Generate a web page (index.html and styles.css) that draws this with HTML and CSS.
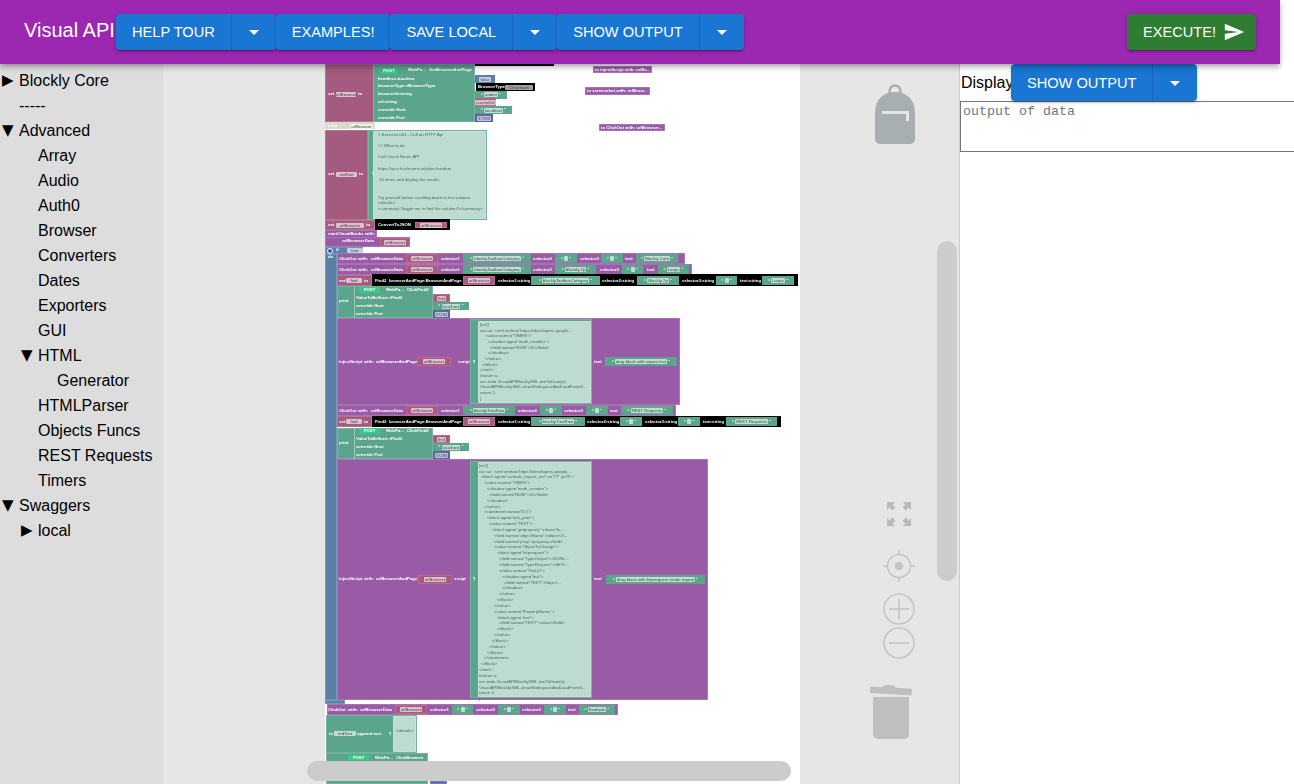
FILE: index.html
```html
<!DOCTYPE html>
<html lang="en">
<head>
  <meta charset="UTF-8">
  <title>Visual API</title>
  <link rel="stylesheet" href="styles.css">
</head>
<body>
  <header class="topbar">
    <div class="brand">Visual API</div>
    <div class="btn-group">
      <button class="btn">HELP TOUR</button>
      <button class="btn btn-drop"><svg viewBox="0 0 24 24"><path d="M7 10l5 5 5-5z"/></svg></button>
    </div>
    <div class="btn-group">
      <button class="btn">EXAMPLES!</button>
    </div>
    <div class="btn-group">
      <button class="btn">SAVE LOCAL</button>
      <button class="btn btn-drop"><svg viewBox="0 0 24 24"><path d="M7 10l5 5 5-5z"/></svg></button>
    </div>
    <div class="btn-group">
      <button class="btn">SHOW OUTPUT</button>
      <button class="btn btn-drop"><svg viewBox="0 0 24 24"><path d="M7 10l5 5 5-5z"/></svg></button>
    </div>
    <button class="btn btn-run">EXECUTE! <svg viewBox="0 0 24 24"><path d="M2.01 21L23 12 2.01 3 2 10l15 2-15 2z"/></svg></button>
  </header>

  <main class="layout">
    <nav class="tree">
      <div class="tree-row"><span class="caret">&#9654;</span>Blockly Core</div>
      <div class="tree-row"><span class="caret"></span>-----</div>
      <div class="tree-row"><span class="caret">&#9660;</span>Advanced</div>
      <div class="tree-row depth1"><span class="caret"></span>Array</div>
      <div class="tree-row depth1"><span class="caret"></span>Audio</div>
      <div class="tree-row depth1"><span class="caret"></span>Auth0</div>
      <div class="tree-row depth1"><span class="caret"></span>Browser</div>
      <div class="tree-row depth1"><span class="caret"></span>Converters</div>
      <div class="tree-row depth1"><span class="caret"></span>Dates</div>
      <div class="tree-row depth1"><span class="caret"></span>Exporters</div>
      <div class="tree-row depth1"><span class="caret"></span>GUI</div>
      <div class="tree-row depth1"><span class="caret">&#9660;</span>HTML</div>
      <div class="tree-row depth2"><span class="caret"></span>Generator</div>
      <div class="tree-row depth1"><span class="caret"></span>HTMLParser</div>
      <div class="tree-row depth1"><span class="caret"></span>Objects Funcs</div>
      <div class="tree-row depth1"><span class="caret"></span>REST Requests</div>
      <div class="tree-row depth1"><span class="caret"></span>Timers</div>
      <div class="tree-row"><span class="caret">&#9660;</span>Swaggers</div>
      <div class="tree-row depth1"><span class="caret">&#9654;</span>local</div>
    </nav>

    <section class="workspace">
      <div class="sheet" id="sheet"></div>

      <!-- Blockly controls -->
      <svg class="ctl backpack" viewBox="0 0 40 60">
        <circle cx="20" cy="7" r="5.5" fill="none" stroke="#a8afb1" stroke-width="2.5"/>
        <path d="M0 29C0 15 9 8 20 8s20 7 20 21v26a5 5 0 0 1-5 5H5a5 5 0 0 1-5-5z" fill="#a8afb1"/>
        <path d="M7 27h27v10h-3v-7H7z" fill="#e6e6e6"/>
      </svg>
      <svg class="ctl fullscreen" viewBox="0 0 24 24" fill="#b3bbc0">
        <path d="M0 0h8L5.6 2.4 8.4 5.2 5.2 8.4 2.4 5.6 0 8z"/>
        <path d="M24 0h-8l2.4 2.4-2.8 2.8 3.2 3.2 2.8-2.8L24 8z"/>
        <path d="M0 24h8l-2.400-2.400 2.800-2.800-3.200-3.200-2.800 2.800L0 16z"/>
        <path d="M24 24h-8l2.400-2.400-2.800-2.800 3.200-3.200 2.800 2.800L24 16z"/>
      </svg>
      <svg class="ctl target" viewBox="0 0 32 32" fill="none" stroke="#c4c4c4" stroke-width="1.5">
        <circle cx="16" cy="16" r="11.500"/>
        <path d="M16 0v4M16 28v4M0 16h4M28 16h4"/>
        <circle cx="16" cy="16" r="4.300" fill="#c4c4c4" stroke="none"/>
      </svg>
      <svg class="ctl zoom-in" viewBox="0 0 32 32" fill="none" stroke="#c4c4c4" stroke-width="1.500">
        <circle cx="16" cy="16" r="15"/>
        <path d="M16 6v20M6 16h20"/>
      </svg>
      <svg class="ctl zoom-out" viewBox="0 0 32 32" fill="none" stroke="#c4c4c4" stroke-width="1.500">
        <circle cx="16" cy="16" r="15"/>
        <path d="M6 16h20"/>
      </svg>
      <svg class="ctl trash" viewBox="0 0 42 56" fill="#bfbfbf">
        <path d="M0 3.500l12 .7c1-1.800 3-2.200 6-2.200 4 0 7 .7 8 2.800l16 1-.4 6.700L0 10z"/>
        <path d="M3 14h36v37a5 5 0 0 1-5 5H8a5 5 0 0 1-5-5z"/>
      </svg>

      <div class="scroll scroll-h"></div>
      <div class="scroll scroll-v"></div>
    </section>

    <aside class="output">
      <div class="output-head">
        <span class="output-label">Display</span>
        <div class="btn-group">
          <button class="btn">SHOW OUTPUT</button>
          <button class="btn btn-drop"><svg viewBox="0 0 24 24"><path d="M7 10l5 5 5-5z"/></svg></button>
        </div>
      </div>
      <textarea class="output-text" placeholder="output of data"></textarea>
    </aside>
  </main>

  <script>
    // Sheet origin in page coordinates, the block data below is in page coordinates
    const ORIGIN_X = 325, ORIGIN_Y = 64;
    const sheet = document.getElementById('sheet');

    function put(cls, x, y, w, h, text) {
      const div = document.createElement('div');
      div.className = cls;
      div.style.left = `${x - ORIGIN_X}px`;
      div.style.top = `${y - ORIGIN_Y}px`;
      if (w) div.style.width = `${w}px`;
      if (h) div.style.height = `${h}px`;
      if (text) div.textContent = text;
      sheet.appendChild(div);
      return div;
    }

    // Block bodies: class, x1, y1, x2, y2
    const bodies = [
      ['blk black', 374, 64, 554, 65.5],
      ['blk mag', 325, 64, 374, 122],
      ['blk green', 373, 64, 475, 122],
      ['blk pale', 325, 122, 375, 129],
      ['blk mag', 325, 130, 368, 220],
      ['blk green', 368, 130, 487, 220],
      ['blk mint', 373, 131, 486, 219],
      ['blk mag', 325, 220, 375, 230],
      ['blk black', 375, 219, 450, 230],
      ['blk purple', 325, 230, 377, 238],
      ['blk purple', 325, 237, 410, 247],
      ['blk blue', 325, 247, 363, 254],
      ['blk blue', 325, 254, 337, 700],
      ['blk blue', 325, 700, 345, 704],
      ['blk purple', 337, 253, 685, 264],
      ['blk purple', 337, 264, 692, 275],
      ['blk mag', 337, 275, 372, 286],
      ['blk black', 372, 274, 798, 286],
      ['blk green', 337, 286, 433, 318],
      ['blk divider', 354, 287, 0.8, 31],
      ['blk purple', 337, 318, 680, 405],
      ['blk green', 470, 319, 592, 404],
      ['blk mint', 478, 321, 591, 403],
      ['blk purple', 337, 405, 676, 416],
      ['blk mag', 337, 416, 372, 427],
      ['blk black', 372, 416, 781, 427],
      ['blk green', 337, 428, 433, 459],
      ['blk divider', 354, 428, 0.8, 31],
      ['blk purple', 337, 459, 708, 700],
      ['blk green', 470, 461, 592, 698],
      ['blk mint', 478, 462, 591, 697],
      ['blk purple', 327, 704, 618, 715],
      ['blk green', 326, 715, 417, 753],
      ['blk mint', 393, 716, 416, 752],
      ['blk green', 326, 753, 428, 784],
      ['blk indigo', 430, 781, 447, 784],
      ['blk purple', 593, 66, 652, 73],
      ['blk purple', 585, 87, 650, 95],
      ['blk purple', 599, 124, 665, 131]
    ];
    bodies.forEach(b => {
      // divider rows give a plain width and height instead of x2, y2
      if (b[0] === 'blk divider') put(b[0], b[1], b[2], b[3], b[4]);
      else put(b[0], b[1], b[2], b[3] - b[1], b[4] - b[2]);
    });

    // White labels: x, centre y, text
    const labels = [
      [408, 70, 'WebPa...'], [429, 70, 'GetBrowserAndPage'],
      [378, 79, 'headless:boolean'], [378, 86, 'browserType:<BrowserType'], [378, 94, 'browserId:string'],
      [378, 102, 'url:string'], [378, 110, 'override Host'], [378, 118, 'override Port'],
      [328, 94, 'set'], [358, 94, 'to'],
      [328, 126, 'print'], [328, 174, 'set'], [359, 174, 'to'], [372, 174, '\u00b6'],
      [328, 225, 'set'], [366, 225, 'to'], [378, 225, 'ConvertToJSON'],
      [328, 234, 'startChuckBooks'], [365, 234, 'with:'], [342, 241, 'urlBrowserData'],
      [336, 250, 'if'], [328, 257, 'do'],
      [595, 69.500, 'to injectScript with: urlBr...'], [587, 91, 'to screenshot with: urlBrow...'], [601, 127.500, 'to ClickOut with: urlBrowser...'],
      // ClickOut rows
      [339, 258.500, 'ClickOut'], [358, 258.500, 'with:'], [371, 258.500, 'urlBrowserData'], [441, 258.500, 'selector1'], [533, 258.500, 'selector2'], [580, 258.500, 'selector3'], [625, 258.500, 'text'],
      [339, 269.500, 'ClickOut'], [358, 269.500, 'with:'], [371, 269.500, 'urlBrowserData'], [441, 269.500, 'selector1'], [533, 269.500, 'selector2'], [600, 269.500, 'selector3'], [647, 269.500, 'text'],
      [339, 410.500, 'ClickOut'], [358, 410.500, 'with:'], [371, 410.500, 'urlBrowserData'], [441, 410.500, 'selector1'], [518, 410.500, 'selector2'], [564, 410.500, 'selector3'], [610, 410.500, 'text'],
      [328, 709.500, 'ClickOut'], [348, 709.500, 'with:'], [360, 709.500, 'urlBrowserData'], [430, 709.500, 'selector1'], [476, 709.500, 'selector2'], [522, 709.500, 'selector3'], [568, 709.500, 'text'],
      // set find rows
      [339, 280.500, 'set'], [364, 280.500, 'to'], [375, 280.500, 'Find2'], [389, 280.500, 'browserAndPage:BrowserAndPage'], [498, 280.500, 'selector1:string'], [602, 280.500, 'selector2:string'], [682, 280.500, 'selector3:string'], [740, 280.500, 'text:string'],
      [339, 421.500, 'set'], [364, 421.500, 'to'], [375, 421.500, 'Find2'], [389, 421.500, 'browserAndPage:BrowserAndPage'], [498, 421.500, 'selector1:string'], [587, 421.500, 'selector2:string'], [645, 421.500, 'selector3:string'], [703, 421.500, 'text:string'],
      // print blocks
      [339, 301, 'print'], [386, 290, 'WebPa...'], [407, 290, 'ClickFind2'], [356, 298, 'ValueToBeSent:<Find2'], [356, 306, 'override Host'], [356, 314, 'override Port'],
      [339, 443, 'print'], [386, 431, 'WebPa...'], [407, 431, 'ClickFind2'], [356, 439, 'ValueToBeSent:<Find2'], [356, 447, 'override Host'], [356, 455, 'override Port'],
      // injectScript blocks
      [339, 361.500, 'injectScript'], [364, 361.500, 'with:'], [376, 361.500, 'urlBrowserAndPage'], [458, 361.500, 'script'], [473, 361.500, '\u00b6'], [594, 361.500, 'text'],
      [339, 579, 'injectScript'], [364, 579, 'with:'], [376, 579, 'urlBrowserAndPage'], [454, 579, 'script'], [473, 579, '\u00b6'], [594, 579, 'text'],
      // append text
      [329, 733.500, 'to'], [357, 733.500, 'append text'], [389, 733.500, '\u00b6'], [375, 757.500, 'WebPa...'], [396, 757.500, 'ClickBrowser']
    ];
    labels.forEach(l => put('lbl', l[0], l[1] - 3, 0, 0, l[2]));

    // Fields on the block itself: x1, x2, centre y, text
    const fields = [
      [336, 356, 94, 'urlBrowser'], [350, 373, 126, 'urlBrowser'],
      [336, 357, 174, 'mdText'], [336, 364, 225, 'urlBrowser'],
      [346, 362, 280.500, 'find'], [346, 362, 421.500, 'find'], [334, 356, 733.500, 'mdText'],
      [347, 363, 250.500, 'true']
    ];
    fields.forEach(f => put('field', f[0], f[2] - 2.500, f[1] - f[0], 5, f[3]));

    // Plugged in value blocks: kind, x1, x2, y1, y2, text
    const chips = [
      ['bool', 475, 495, 75, 83, 'false'],
      ['str', 475, 507, 90.500, 98.500, 'andrei'],
      ['var', 475, 496, 98, 106, 'currentUrl'],
      ['str', 475, 512, 106, 114, 'localhost'],
      ['num', 475, 493, 114, 122, '37283'],
      ['var', 415, 447, 222, 228, 'urlBrowser'],
      ['var', 380, 410, 238, 246, 'urlBrowser'],
      ['var', 406, 438, 254, 263, 'urlBrowser'], ['str', 463, 531, 254, 263, 'blocklyToolboxCategory'], ['str', 555, 577, 254, 263, ' '], ['str', 601, 623, 254, 263, ' '], ['str', 636, 678, 254, 263, 'Blockly Core'],
      ['var', 406, 438, 265, 274, 'urlBrowser'], ['str', 463, 531, 265, 274, 'blocklyToolboxCategory'], ['str', 555, 596, 265, 274, 'Blockly 2p'], ['str', 622, 643, 265, 274, ' '], ['str', 658, 689, 265, 274, 'Loops'],
      ['var', 463, 495, 276, 285, 'urlBrowser'], ['str', 531, 600, 276, 285, 'blocklyToolboxCategory'], ['str', 637, 679, 276, 285, 'Blockly 2p'], ['str', 716, 737, 276, 285, ' '], ['str', 762, 794, 276, 285, 'Loops'],
      ['var', 433, 450, 294, 302, 'find'], ['str', 433, 469, 302, 310, 'localhost'], ['num', 433, 450, 310, 318, '37283'],
      ['var', 417, 451, 357, 366, 'urlBrowser'], ['str', 605, 677, 357, 366, 'drag block with repeat text'],
      ['var', 406, 438, 406, 415, 'urlBrowser'], ['str', 463, 515, 406, 415, 'blocklyTreeRow'], ['str', 540, 562, 406, 415, ' '], ['str', 586, 608, 406, 415, ' '], ['str', 621, 673, 406, 415, 'REST Requests'],
      ['var', 463, 495, 417, 426, 'urlBrowser'], ['str', 531, 585, 417, 426, 'blocklyTreeRow'], ['str', 620, 642, 417, 426, ' '], ['str', 678, 700, 417, 426, ' '], ['str', 726, 777, 417, 426, 'REST Requests'],
      ['var', 433, 450, 435, 443, 'find'], ['str', 433, 469, 443, 451, 'localhost'], ['num', 433, 450, 451, 459, '37283'],
      ['var', 418, 452, 575, 584, 'urlBrowser'], ['str', 606, 705, 575, 584, 'drag block with httprequest inside repeat'],
      ['var', 395, 427, 705, 714, 'urlBrowser'], ['str', 452, 473, 705, 714, ' '], ['str', 498, 520, 705, 714, ' '], ['str', 544, 566, 705, 714, ' '], ['str', 579, 615, 705, 714, 'Example']
    ];
    chips.forEach(c => {
      const chip = put(`chip ${c[0]}`, c[1], c[3], c[2] - c[1], c[4] - c[3]);
      const inner = document.createElement('span');
      inner.textContent = c[5];
      if (c[0] === 'str') chip.append('\u201c');
      chip.appendChild(inner);
      if (c[0] === 'str') chip.append('\u201d');
    });

    // The black BrowserType call and the POST pills
    put('blk black', 476, 83, 59, 7.500);
    put('lbl', 478, 83.500, 0, 0, 'BrowserType');
    put('field', 505, 84.500, 28, 5, 'Chromium');
    [[381, 68, 16, 6], [359, 287, 21, 6], [359, 428, 21, 6], [348, 755, 21, 5]].forEach(p => put('post', p[0], p[1], p[2], p[3], 'POST'));
    put('gear', 327, 247.500, 6, 6);

    // Text inside the comment blocks
    const intro = [
      [134.700, '# Exercise 001 - Call an HTTP Api'], [146, '## What to do'], [157, 'Call Chuck Norris API'],
      [168.700, 'https://api.chucknorris.io/jokes/random'], [180, ' 10 times and display the results'],
      [197.700, 'Try yourself before scrolling down to the solution'], [203.300, '<details>'],
      [208.700, '<summary>Toggle me to find the solution?</summary>']
    ];
    intro.forEach(r => put('code', 378, r[0] - 3, 0, 0, r[1]));

    const script1 = [
      [0, '[=>]{'], [0, 'var a= `<xml xmlns="https://developers.google...'], [5, '<value name="TIMES">'],
      [8, '<shadow type="math_number">'], [10, '<field name="NUM">10</field>'], [8, '</shadow>'],
      [5, '</value>'], [2, '</block>'], [0, '</xml>`;'], [0, '//return a;'],
      [0, 'var xml= VisualAPIBlocklyXML.textToDom(a);'], [0, 'VisualAPIBlocklyXML.clearWorkspaceAndLoadFromX...'],
      [0, 'return 1;'], [0, '}']
    ];
    script1.forEach((r, i) => put('code', 480 + r[0], 325 + i * 5.680 - 3, 0, 0, r[1]));

    const script2 = [
      [0, '[=>]{'], [0, 'var a= `<xml xmlns="https://developers.google...'], [2, '<block type="controls_repeat_ext" x="77" y="8">'],
      [5, '<value name="TIMES">'], [8, '<shadow type="math_number">'], [10, '<field name="NUM">10</field>'],
      [8, '</shadow>'], [5, '</value>'], [5, '<statement name="DO">'], [8, '<block type="text_print">'],
      [10, '<value name="TEXT">'], [13, '<block type="getproperty" inline="fa...'], [15, '<field name="objectName">object</f...'],
      [15, '<field name="prop">property</field>'], [15, '<value name="ObjectToChange">'], [18, '<block type="httprequest">'],
      [20, '<field name="TypeOutput">JSON<...'], [20, '<field name="TypeRequest">GET<...'], [20, '<value name="TheUrl">'],
      [23, '<shadow type="text">'], [25, '<field name="TEXT">https:/...'], [23, '</shadow>'], [20, '</value>'],
      [18, '</block>'], [15, '</value>'], [15, '<value name="PropertyName">'], [18, '<block type="text">'],
      [20, '<field name="TEXT">value</field>'], [18, '</block>'], [15, '</value>'], [13, '</block>'], [10, '</value>'],
      [8, '</block>'], [5, '</statement>'], [2, '</block>'], [0, '</xml>`;'], [0, '//return a;'],
      [0, 'var xml= VisualAPIBlocklyXML.textToDom(a);'], [0, 'VisualAPIBlocklyXML.clearWorkspaceAndLoadFromX...'],
      [0, 'return 1;'], [0, '}']
    ];
    script2.forEach((r, i) => put('code', 479 + r[0], 465.700 + i * 5.840 - 3, 0, 0, r[1]));

    put('code', 396, 728, 0, 0, '<details>');
  </script>
</body>
</html>
```

FILE: styles.css
```css
* { box-sizing: border-box; }
html, body { height: 100%; }
body {
  margin: 0;
  overflow: hidden;
  font-family: "Liberation Sans", Arial, sans-serif;
  background: #fff;
}

/* Top bar */
.topbar {
  position: relative;
  z-index: 5;
  display: flex;
  align-items: center;
  width: 1280px;
  height: 64px;
  padding-right: 24px;
  background: #9c27b0;
  box-shadow: 0 2px 4px -1px rgba(0,0,0,0.2), 0 4px 5px rgba(0,0,0,0.14), 0 1px 10px rgba(0,0,0,0.12);
}
.brand {
  flex: 0 0 116px;
  margin-bottom: 4px;
  padding-left: 24px;
  font-size: 20px;
  color: #fff;
  white-space: nowrap;
}
.btn-group {
  display: flex;
  border-radius: 4px;
  box-shadow: 0 3px 1px -2px rgba(0,0,0,0.2), 0 2px 2px rgba(0,0,0,0.14), 0 1px 5px rgba(0,0,0,0.12);
}
.btn {
  height: 36px;
  padding: 0 16px;
  border: none;
  border-radius: 4px;
  background: #1976d2;
  color: #fff;
  font-family: inherit;
  font-size: 14.6px;
  white-space: nowrap;
}
.btn-group .btn:not(:last-child) {
  border-radius: 4px 0 0 4px;
  border-right: 1px solid #1565c0;
}
.btn-group .btn-drop { border-radius: 0 4px 4px 0; }
.btn-drop {
  display: flex;
  align-items: center;
  justify-content: center;
  width: 44px;
  padding: 0;
}
.btn-drop svg { width: 24px; height: 24px; fill: #fff; }
.btn-run {
  display: flex;
  align-items: center;
  gap: 7px;
  margin-left: auto;
  padding: 0 11px 0 16px;
  background: #2e7d32;
  box-shadow: 0 3px 1px -2px rgba(0,0,0,0.2), 0 2px 2px rgba(0,0,0,0.14), 0 1px 5px rgba(0,0,0,0.12);
}
.btn-run svg { width: 22px; height: 22px; fill: #fff; }

/* Main columns */
.layout {
  display: flex;
  height: 720px;
}

/* Toolbox tree */
.tree {
  flex: 0 0 163px;
  padding-top: 4px;
  background: #ddd;
  font-size: 16px;
  color: #000;
}
.tree-row {
  display: flex;
  align-items: center;
  height: 25px;
  padding-left: 2px;
  white-space: nowrap;
}
.depth1 { padding-left: 21px; }
.depth2 { padding-left: 40px; }
.caret {
  flex: 0 0 17px;
  font-family: "DejaVu Sans", sans-serif;
  font-size: 15px;
  line-height: 25px;
}

/* Blockly workspace */
.workspace {
  position: relative;
  flex: 0 0 796px;
  overflow: hidden;
  background: #e6e6e6;
}
.sheet {
  position: relative;
  width: 475px;
  height: 100%;
  margin-left: 162px;
  overflow: hidden;
  background: #fff;
  filter: blur(0.35px);
}
.blk { position: absolute; box-shadow: inset 0 0 0 0.6px rgba(255,255,255,0.3); }
.black { background: #000; box-shadow: none; }
.mag { background: #a55b80; }
.green { background: #5ba58c; }
.purple { background: #995ba5; }
.blue { background: #5b80a5; }
.indigo { background: #5b67a5; }
.pale { background: #d9d9c6; }
.mint { background: #bddccf; border-radius: 1px; }
.divider { background: rgba(255,255,255,0.4); box-shadow: none; }

.lbl, .code, .field, .post, .chip { position: absolute; white-space: pre; font-size: 4.3px; line-height: 6px; }
.lbl { font-weight: 700; color: #fff; }
.code { color: #4a6a5e; }
.field {
  background: rgba(255,255,255,0.62);
  border-radius: 1px;
  color: #444;
  line-height: 5px;
  text-align: center;
}
.post {
  background: #36c98a;
  color: #fff;
  font-weight: 700;
  text-align: center;
}
.gear { position: absolute; border: 1px solid #fff; border-radius: 50%; background: #2a5cd0; }
.chip {
  display: flex;
  align-items: center;
  justify-content: center;
  gap: 1px;
  color: #fff;
  font-weight: 700;
}
.chip span {
  min-width: 4px;
  padding: 0 1px;
  background: rgba(255,255,255,0.62);
  border-radius: 1px;
  color: #444;
  font-weight: 400;
  line-height: 5px;
}
.chip.str { background: #5ba58c; }
.chip.var { background: #a55b80; box-shadow: inset 0 0 0 1px #c4668f; }
.chip.bool { background: #5b80a5; }
.chip.num { background: #5b67a5; }

/* Workspace controls */
.ctl { position: absolute; }
.backpack { left: 712px; top: 20px; width: 40px; height: 60px; }
.fullscreen { left: 724px; top: 438px; width: 24px; height: 24px; }
.target { left: 720px; top: 486px; width: 32px; height: 32px; }
.zoom-in { left: 720px; top: 529px; width: 32px; height: 32px; }
.zoom-out { left: 720px; top: 563px; width: 32px; height: 32px; }
.trash { left: 707px; top: 619px; width: 42px; height: 56px; }

.scroll { position: absolute; background: #ccc; border-radius: 10px; }
.scroll-h { left: 144px; top: 697px; width: 484px; height: 20px; }
.scroll-v { left: 774px; top: 177px; width: 20px; height: 340px; }

/* Output panel */
.output {
  flex: 1;
  min-width: 0;
  overflow: hidden;
  border-left: 1px solid #ccc;
}
.output-head {
  display: flex;
  align-items: center;
  height: 37px;
}
.output-label {
  flex: 0 0 51px;
  min-width: 0;
  padding-left: 1px;
  font-size: 16px;
  white-space: nowrap;
}
.output-head .btn { height: 37px; }
.output-text {
  display: block;
  width: 345px;
  height: 51px;
  margin-left: 0;
  padding: 2px;
  border: 1px solid #767676;
  font-family: "Liberation Mono", monospace;
  font-size: 13.333px;
  resize: none;
}
```
